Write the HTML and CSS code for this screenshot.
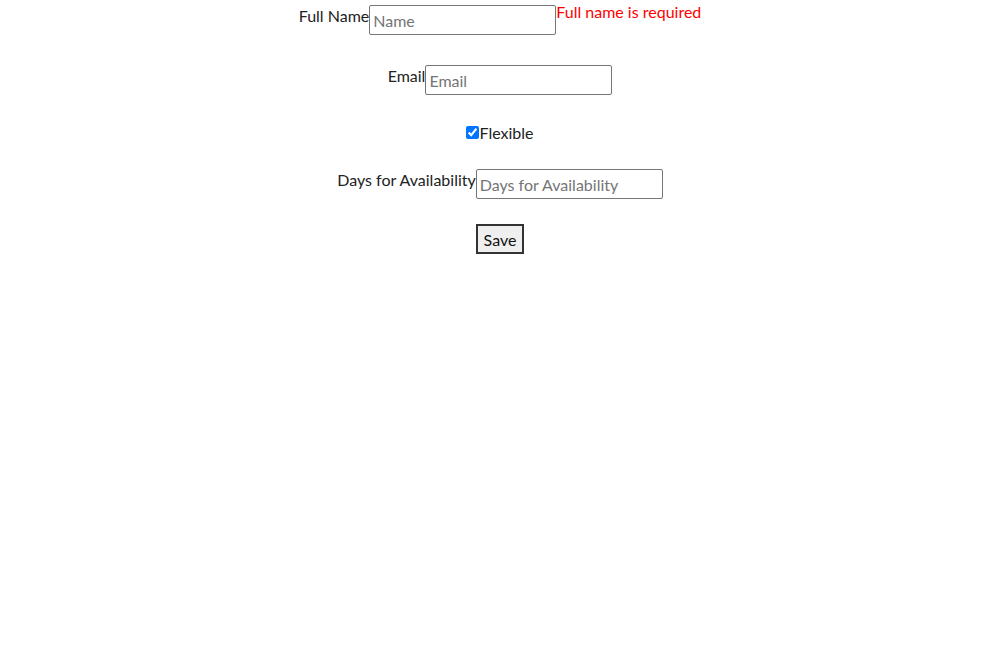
FILE: index.html
```html
<!DOCTYPE html>
<html>
<head>
<meta charset="utf-8">
<link rel="stylesheet" href="styles.css">
</head>
<body>
<form class="form">
  <div class="row">
    <label class="lbl" for="name">Full Name</label>
    <input class="field" id="name" type="text" placeholder="Name">
    <span class="error">Full name is required</span>
  </div>
  <div class="row">
    <label class="lbl" for="email">Email</label>
    <input class="field" id="email" type="text" placeholder="Email">
  </div>
  <div class="row row-check">
    <input class="check" id="flex" type="checkbox" checked>
    <label class="lbl" for="flex">Flexible</label>
  </div>
  <div class="row">
    <label class="lbl" for="days">Days for Availability</label>
    <input class="field" id="days" type="text" placeholder="Days for Availability">
  </div>
  <div class="row row-btn">
    <button class="save" type="button">Save</button>
  </div>
</form>
</body>
</html>
```
FILE: styles.css
```css
html, body {
  margin: 0;
  padding: 0;
  background: #fff;
}
body {
  font-family: Lato, "Open Sans", sans-serif;
  font-size: 16px;
  color: #222;
}
.form {
  padding-top: 5px;
  display: flex;
  flex-direction: column;
}
.row {
  display: flex;
  justify-content: center;
  margin-bottom: 30px;
  line-height: 21px;
}
.lbl {
  display: block;
}
.field {
  box-sizing: border-box;
  width: 187px;
  height: 30px;
  margin: 0;
  padding: 1px 3px;
  font: inherit;
  font-size: 16px;
  border: 1px solid #767676;
  border-radius: 2px;
  color: #222;
}
.field::placeholder {
  color: #757575;
}
.error {
  color: #ff0000;
  margin-top: -4px;
}
.row-check {
  align-items: center;
  margin-top: -3px;
  margin-bottom: 26px;
}
.check {
  width: 13px;
  height: 13px;
  margin: 0;
}
.row-btn {
  margin-top: -5px;
}
.save {
  box-sizing: border-box;
  width: 48px;
  height: 30px;
  margin: 0;
  padding: 0;
  font: inherit;
  color: #111;
  background: #efefef;
  border: 2px solid #333;
  border-radius: 0;
}
```
